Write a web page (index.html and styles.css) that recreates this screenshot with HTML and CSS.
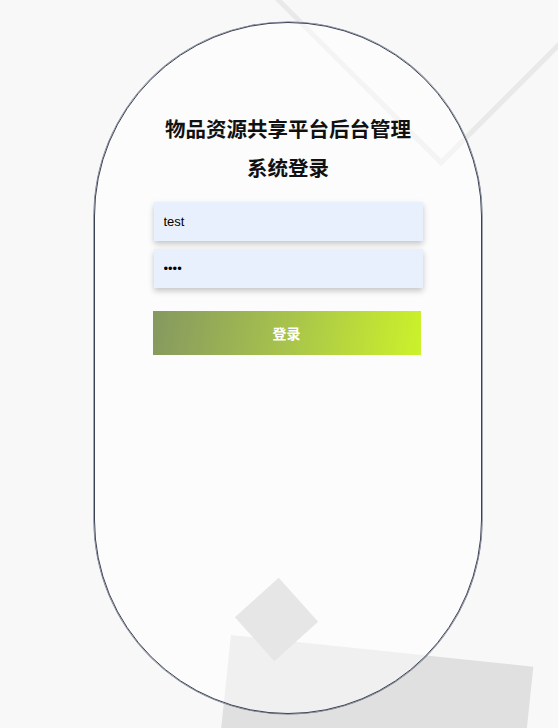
FILE: index.html
```html
<!DOCTYPE html>
<html lang="zh-CN">
<head>
<meta charset="utf-8">
<title>物品资源共享平台后台管理系统登录</title>
<link rel="stylesheet" href="styles.css">
</head>
<body>
<div class="backdrop">
  <div class="deco deco-frame"></div>
  <div class="deco deco-slab"></div>
</div>
<div class="overlay">
  <div class="deco deco-diamond"></div>
</div>
<main class="stage">
  <section class="pill">
    <h2 class="title">物品资源共享平台后台管理系统登录</h2>
    <form class="form">
      <input class="field" type="text" value="test">
      <input class="field" type="password" value="1234">
      <button class="submit" type="button">登录</button>
    </form>
  </section>
</main>
</body>
</html>
```
FILE: styles.css
```css
html, body {
  margin: 0;
  padding: 0;
}
body {
  width: 558px;
  height: 728px;
  overflow: hidden;
  position: relative;
  background: #f8f8f8;
  font-family: "Noto Sans CJK SC", "Liberation Sans", sans-serif;
}
.backdrop,
.overlay {
  position: absolute;
  left: 0;
  top: 0;
  width: 558px;
  height: 728px;
  overflow: hidden;
  z-index: 0;
}
.overlay {
  z-index: 2;
  pointer-events: none;
}
.deco {
  position: absolute;
  box-sizing: border-box;
}
.deco-frame {
  left: 291px;
  top: -196px;
  width: 300px;
  height: 300px;
  border: 5px solid #e9e9e9;
  transform: rotate(45deg);
}
.deco-slab {
  left: 231px;
  top: 635px;
  width: 304px;
  height: 220px;
  background: #e0e0e0;
  transform-origin: 0 0;
  transform: rotate(6deg);
}
.deco-diamond {
  left: 247px;
  top: 590px;
  width: 59px;
  height: 59px;
  background: #e6e6e6;
  transform: rotate(48deg);
}
.stage {
  position: relative;
  z-index: 1;
  padding: 22px 0 0 94px;
}
.pill {
  box-sizing: border-box;
  width: 388px;
  height: 692px;
  border: 1px solid #3a4255;
  box-shadow: 0 0 0.6px 0.6px rgba(58, 66, 85, 0.75);
  border-radius: 194px;
  background: rgba(255, 255, 255, 0.5);
  display: flex;
  flex-direction: column;
  align-items: center;
  padding-top: 86px;
}
.title {
  margin: 0;
  width: 260px;
  text-align: center;
  font-size: 20.5px;
  line-height: 39px;
  font-weight: 700;
  color: #111;
}
.form {
  width: 269px;
  margin-top: 15px;
  display: flex;
  flex-direction: column;
}
.field {
  box-sizing: border-box;
  height: 39px;
  margin: 0 0 8px;
  padding: 0 10px;
  border: none;
  outline: none;
  background: #e8f0fe;
  color: #000;
  font-family: "Liberation Sans", Arial, sans-serif;
  font-size: 13px;
  box-shadow: 0 3px 6px rgba(0, 0, 0, 0.22);
}
.submit {
  width: 268px;
  height: 44px;
  margin: 15px 0 0 -1px;
  border: none;
  background: linear-gradient(100deg, #859860 0%, #a8c34c 50%, #cbf22a 100%);
  color: #fff;
  font-family: "Noto Sans CJK SC", sans-serif;
  font-size: 14px;
  font-weight: 700;
  cursor: pointer;
}
```
